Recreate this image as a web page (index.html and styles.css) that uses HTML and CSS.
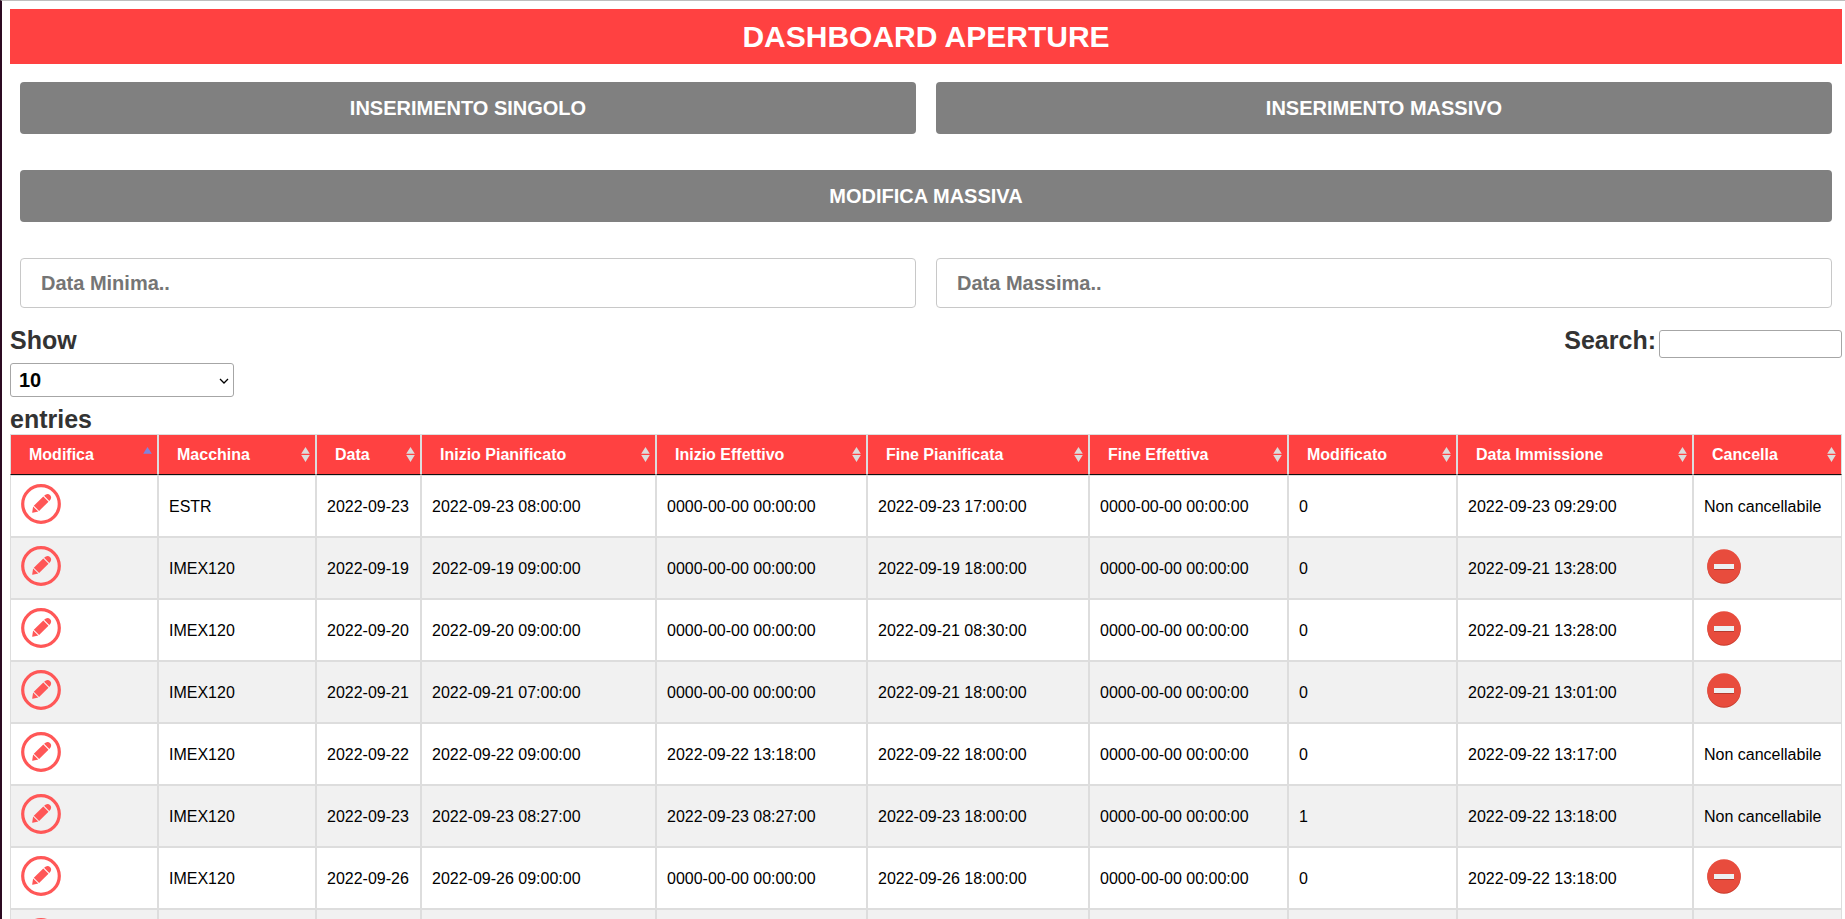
FILE: index.html
```html
<!DOCTYPE html>
<html lang="it">
<head>
<meta charset="utf-8">
<title>Dashboard Aperture</title>
<link rel="stylesheet" href="styles.css">
</head>
<body>
<svg class="sprite" aria-hidden="true">
  <symbol id="sort" viewBox="0 0 19 19">
    <path fill="#dcdcdc" d="M9.500 2 L13.800 8.800 H5.200 Z M5.200 10.100 H13.800 L9.500 17 Z"/>
  </symbol>
  <symbol id="sort-asc" viewBox="0 0 19 19">
    <path fill="#7f84dc" d="M9.500 2 L13.800 8.800 H5.200 Z"/>
  </symbol>
  <symbol id="edit" viewBox="0 0 40 40">
    <circle cx="20" cy="20" r="18.300" fill="none" stroke="#ff5757" stroke-width="3.200"/>
    <path fill="#ff5757" d="M22.300 12.600 L27.500 17.700 L18.100 26.900 L12.800 21.800 Z M23.100 11.800 Q26.500 8.600 29.200 11.300 Q31.500 14 28.300 17 Z M12.100 22.500 L17.300 27.600 L11.700 28.700 Q11.200 28.700 11.200 28.200 Z"/>
  </symbol>
  <symbol id="remove" viewBox="0 0 40 40">
    <circle cx="20" cy="21" r="16.700" fill="#c83a2b"/>
    <circle cx="20" cy="20" r="16.700" fill="#e84c3d"/>
    <rect x="10" y="19" width="20" height="5" fill="#b63a2d"/>
    <rect x="10" y="18" width="20" height="5" fill="#ecf0f1"/>
  </symbol>
</svg>
<main class="page">
  <h1 class="title">DASHBOARD APERTURE</h1>
  <div class="row">
    <button class="action" type="button">INSERIMENTO SINGOLO</button>
    <button class="action" type="button">INSERIMENTO MASSIVO</button>
  </div>
  <div class="row">
    <button class="action" type="button">MODIFICA MASSIVA</button>
  </div>
  <div class="row row-filters">
    <input class="date" type="text" placeholder="Data Minima.." aria-label="Data Minima">
    <input class="date" type="text" placeholder="Data Massima.." aria-label="Data Massima">
  </div>
  <div class="tools">
    <label class="length">Show
      <span class="length-box">
        <select class="length-select"><option>10</option><option>25</option><option>50</option><option>100</option></select>
        <svg class="chevron" viewBox="0 0 10 6"><path d="M1 1 L5 5 L9 1" fill="none" stroke="#000" stroke-width="1.300"/></svg>
      </span>
      entries</label>
    <label class="search">Search:<input class="search-input" type="search"></label>
  </div>
  <table class="grid">
    <colgroup>
      <col class="c-edit"><col class="c-machine"><col class="c-date"><col class="c-start"><col class="c-start-real"><col class="c-end"><col class="c-end-real"><col class="c-changed"><col class="c-created"><col class="c-remove">
    </colgroup>
    <thead>
      <tr>
        <th><button class="sort" type="button">Modifica<svg><use href="#sort-asc"/></svg></button></th>
        <th><button class="sort" type="button">Macchina<svg><use href="#sort"/></svg></button></th>
        <th><button class="sort" type="button">Data<svg><use href="#sort"/></svg></button></th>
        <th><button class="sort" type="button">Inizio Pianificato<svg><use href="#sort"/></svg></button></th>
        <th><button class="sort" type="button">Inizio Effettivo<svg><use href="#sort"/></svg></button></th>
        <th><button class="sort" type="button">Fine Pianificata<svg><use href="#sort"/></svg></button></th>
        <th><button class="sort" type="button">Fine Effettiva<svg><use href="#sort"/></svg></button></th>
        <th><button class="sort" type="button">Modificato<svg><use href="#sort"/></svg></button></th>
        <th><button class="sort" type="button">Data Immissione<svg><use href="#sort"/></svg></button></th>
        <th><button class="sort" type="button">Cancella<svg><use href="#sort"/></svg></button></th>
      </tr>
    </thead>
    <tbody>
      <tr>
        <td class="icon-cell"><a class="icon" href="#" aria-label="Modifica"><svg><use href="#edit"/></svg></a></td>
        <td>ESTR</td><td>2022-09-23</td><td>2022-09-23 08:00:00</td><td>0000-00-00 00:00:00</td><td>2022-09-23 17:00:00</td><td>0000-00-00 00:00:00</td><td>0</td><td>2022-09-23 09:29:00</td>
        <td>Non cancellabile</td>
      </tr>
      <tr>
        <td class="icon-cell"><a class="icon" href="#" aria-label="Modifica"><svg><use href="#edit"/></svg></a></td>
        <td>IMEX120</td><td>2022-09-19</td><td>2022-09-19 09:00:00</td><td>0000-00-00 00:00:00</td><td>2022-09-19 18:00:00</td><td>0000-00-00 00:00:00</td><td>0</td><td>2022-09-21 13:28:00</td>
        <td class="icon-cell"><a class="icon" href="#" aria-label="Cancella"><svg><use href="#remove"/></svg></a></td>
      </tr>
      <tr>
        <td class="icon-cell"><a class="icon" href="#" aria-label="Modifica"><svg><use href="#edit"/></svg></a></td>
        <td>IMEX120</td><td>2022-09-20</td><td>2022-09-20 09:00:00</td><td>0000-00-00 00:00:00</td><td>2022-09-21 08:30:00</td><td>0000-00-00 00:00:00</td><td>0</td><td>2022-09-21 13:28:00</td>
        <td class="icon-cell"><a class="icon" href="#" aria-label="Cancella"><svg><use href="#remove"/></svg></a></td>
      </tr>
      <tr>
        <td class="icon-cell"><a class="icon" href="#" aria-label="Modifica"><svg><use href="#edit"/></svg></a></td>
        <td>IMEX120</td><td>2022-09-21</td><td>2022-09-21 07:00:00</td><td>0000-00-00 00:00:00</td><td>2022-09-21 18:00:00</td><td>0000-00-00 00:00:00</td><td>0</td><td>2022-09-21 13:01:00</td>
        <td class="icon-cell"><a class="icon" href="#" aria-label="Cancella"><svg><use href="#remove"/></svg></a></td>
      </tr>
      <tr>
        <td class="icon-cell"><a class="icon" href="#" aria-label="Modifica"><svg><use href="#edit"/></svg></a></td>
        <td>IMEX120</td><td>2022-09-22</td><td>2022-09-22 09:00:00</td><td>2022-09-22 13:18:00</td><td>2022-09-22 18:00:00</td><td>0000-00-00 00:00:00</td><td>0</td><td>2022-09-22 13:17:00</td>
        <td>Non cancellabile</td>
      </tr>
      <tr>
        <td class="icon-cell"><a class="icon" href="#" aria-label="Modifica"><svg><use href="#edit"/></svg></a></td>
        <td>IMEX120</td><td>2022-09-23</td><td>2022-09-23 08:27:00</td><td>2022-09-23 08:27:00</td><td>2022-09-23 18:00:00</td><td>0000-00-00 00:00:00</td><td>1</td><td>2022-09-22 13:18:00</td>
        <td>Non cancellabile</td>
      </tr>
      <tr>
        <td class="icon-cell"><a class="icon" href="#" aria-label="Modifica"><svg><use href="#edit"/></svg></a></td>
        <td>IMEX120</td><td>2022-09-26</td><td>2022-09-26 09:00:00</td><td>0000-00-00 00:00:00</td><td>2022-09-26 18:00:00</td><td>0000-00-00 00:00:00</td><td>0</td><td>2022-09-22 13:18:00</td>
        <td class="icon-cell"><a class="icon" href="#" aria-label="Cancella"><svg><use href="#remove"/></svg></a></td>
      </tr>
      <tr>
        <td class="icon-cell"><a class="icon" href="#" aria-label="Modifica"><svg><use href="#edit"/></svg></a></td>
        <td></td><td></td><td></td><td></td><td></td><td></td><td></td><td></td><td></td>
      </tr>
    </tbody>
  </table>
</main>
</body>
</html>
```
FILE: styles.css
```css
* {
  box-sizing: border-box;
}

body {
  margin: 0;
  height: 100vh;
  overflow: hidden;
  background: #fff;
  font-family: "Liberation Sans", Arial, sans-serif;
  font-size: 16px;
  color: #000;
}

button,
input,
select {
  font-family: inherit;
  font-weight: bold;
}

.sprite {
  display: none;
}

.page {
  min-height: 100vh;
  padding: 8px 3px 0 8px;
  border-top: 1px solid #bebebe;
  border-left: 2px solid #2c0a22;
}

.title {
  margin: 0 0 8px;
  padding: 10px;
  background: #ff4141;
  color: #fff;
  font-size: 30px;
  line-height: 35px;
  text-align: center;
}

.row {
  display: flex;
  gap: 20px;
  padding: 10px 10px 26px;
}

.row-filters {
  padding-bottom: 17px;
}

.action {
  flex: 1;
  height: 52px;
  border: 0;
  border-radius: 4px;
  background: #808080;
  color: #fff;
  font-size: 20px;
}

.date {
  flex: 1;
  min-width: 0;
  height: 50px;
  padding: 0 20px;
  border: 1px solid #c8c8c8;
  border-radius: 4px;
  font-size: 20px;
}

.date::placeholder {
  color: #757575;
}

.tools {
  display: flex;
  justify-content: space-between;
  align-items: flex-start;
  color: #333;
  font-size: 25px;
  font-weight: bold;
  line-height: 30px;
}

.length {
  display: flex;
  flex-direction: column;
}

.length-box {
  display: flex;
  position: relative;
  margin: 8px 0 7px;
}

.length-select {
  width: 224px;
  height: 34px;
  padding: 0 8px;
  appearance: none;
  border: 1px solid #a6a6a6;
  border-radius: 3px;
  background: #fff;
  color: #000;
  font-size: 20px;
}

.chevron {
  position: absolute;
  top: 15px;
  right: 5px;
  width: 10px;
  height: 6px;
  pointer-events: none;
}

.search {
  display: flex;
  align-items: flex-start;
  gap: 3px;
}

.search-input {
  width: 183px;
  height: 28px;
  margin-top: 5px;
  border: 1px solid #a6a6a6;
  border-radius: 3px;
}

.grid {
  width: 100%;
  table-layout: fixed;
  border-collapse: separate;
  border-spacing: 0;
}

.c-edit { width: 148px; }
.c-machine { width: 158px; }
.c-date { width: 105px; }
.c-start { width: 235px; }
.c-start-real { width: 211px; }
.c-end { width: 222px; }
.c-end-real { width: 199px; }
.c-changed { width: 169px; }
.c-created { width: 236px; }
.c-remove { width: 149px; }

.grid th {
  padding: 0;
  border: 1px solid #ddd;
  border-bottom-color: #111;
  background: #ff4141;
}

.sort {
  display: flex;
  align-items: center;
  justify-content: space-between;
  width: 100%;
  padding: 10px 0 10px 18px;
  border: 0;
  background: none;
  color: #fff;
  font-size: 16px;
  line-height: 19px;
  white-space: nowrap;
}

.sort svg {
  width: 19px;
  height: 19px;
}

.grid td {
  height: 62px;
  padding: 9px 10px 7px;
  border: 1px solid #ddd;
  vertical-align: middle;
  white-space: nowrap;
}

.grid .icon-cell {
  padding: 8px 10px;
}

.grid tbody tr:nth-child(even) {
  background: #f1f1f1;
}

.icon svg {
  width: 40px;
  height: 40px;
}
```
